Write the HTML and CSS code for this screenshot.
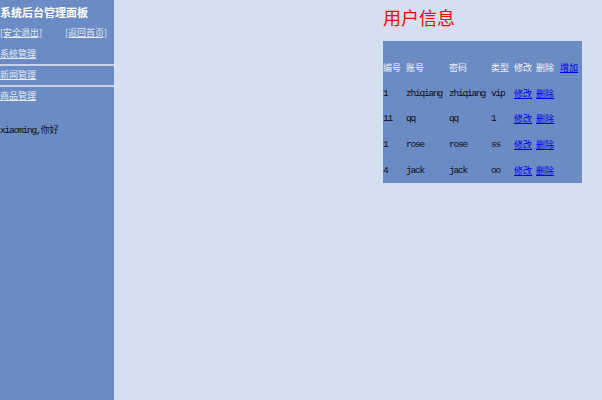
FILE: index.html
```html
<!DOCTYPE html>
<html lang="zh">
<head>
<meta charset="utf-8">
<title>系统后台管理面板</title>
<link rel="stylesheet" href="styles.css">
</head>
<body>
<div class="page">
  <aside class="side">
    <div class="title">系统后台管理面板</div>
    <div class="toplinks">
      <a href="#">[安全退出]</a>
      <a href="#">[返回首页]</a>
    </div>
    <div class="menu"><a href="#">系统管理</a></div>
    <hr class="sep">
    <div class="menu"><a href="#">新闻管理</a></div>
    <hr class="sep">
    <div class="menu"><a href="#">商品管理</a></div>
    <div class="hello"><span class="en">xiaoming,</span>你好</div>
  </aside>
  <main class="main">
    <h1 class="heading">用户信息</h1>
    <div class="box">
      <table class="users">
        <colgroup>
          <col class="c1"><col class="c2"><col class="c3"><col class="c4"><col class="c5"><col class="c6"><col class="c7">
        </colgroup>
        <tr class="head">
          <td>编号</td><td>账号</td><td>密码</td><td>类型</td><td>修改</td><td>删除</td><td><a href="#">增加</a></td>
        </tr>
        <tr>
          <td class="en">1</td><td class="en">zhiqiang</td><td class="en">zhiqiang</td><td class="en">vip</td><td><a href="#">修改</a></td><td><a href="#">删除</a></td><td></td>
        </tr>
        <tr>
          <td class="en">11</td><td class="en">qq</td><td class="en">qq</td><td class="en">1</td><td><a href="#">修改</a></td><td><a href="#">删除</a></td><td></td>
        </tr>
        <tr>
          <td class="en">1</td><td class="en">rose</td><td class="en">rose</td><td class="en">ss</td><td><a href="#">修改</a></td><td><a href="#">删除</a></td><td></td>
        </tr>
        <tr>
          <td class="en">4</td><td class="en">jack</td><td class="en">jack</td><td class="en">oo</td><td><a href="#">修改</a></td><td><a href="#">删除</a></td><td></td>
        </tr>
      </table>
    </div>
  </main>
</div>
</body>
</html>
```
FILE: styles.css
```css
html, body {
  margin: 0;
  padding: 0;
}
body {
  background: #d5dff0;
  font-family: "Noto Sans CJK SC", "Liberation Mono", sans-serif;
  font-size: 9px;
  color: #141420;
}
.page {
  display: flex;
  height: 400px;
}
.side {
  width: 114px;
  flex: none;
  background: #6a8bc3;
  display: flex;
  flex-direction: column;
}
.title {
  color: #ffffff;
  font-weight: bold;
  font-size: 11px;
  line-height: 24px;
}
.toplinks {
  display: flex;
  justify-content: space-between;
  padding-right: 7px;
  line-height: 18px;
}
.side a {
  color: #e4ebf7;
  text-decoration: underline;
}
.menu {
  line-height: 18px;
}
.toplinks + .menu {
  margin-top: 3px;
}
.sep {
  margin: 1px 0 0 0;
  border: none;
  border-top: 2px solid #c8d2e4;
  height: 0;
}
.hello {
  margin-top: 16px;
  line-height: 18px;
  color: #101018;
}
.en {
  font-family: "Liberation Mono", monospace;
  font-size: 9.5px;
  letter-spacing: -1.2px;
  color: #0c0c14;
}
.main {
  flex: 1;
  padding-left: 269px;
}
.heading {
  margin: 5px 0 0 0;
  font-size: 18px;
  line-height: 24px;
  font-weight: normal;
  color: #ff0000;
}
.box {
  margin-top: 12px;
  width: 199px;
  background: #6a8bc3;
  padding-top: 14px;
}
.users {
  border-collapse: collapse;
  table-layout: fixed;
  width: 199px;
}
.users td {
  padding: 0;
  height: 25.6px;
  white-space: nowrap;
  overflow: visible;
}
.c1 { width: 23px; }
.c2 { width: 43px; }
.c3 { width: 42px; }
.c4 { width: 23px; }
.c5 { width: 22px; }
.c6 { width: 24px; }
.c7 { width: 22px; }
.head td {
  color: #f2f4fa;
}
.users a {
  color: #0000ee;
  text-decoration: underline;
}
```
